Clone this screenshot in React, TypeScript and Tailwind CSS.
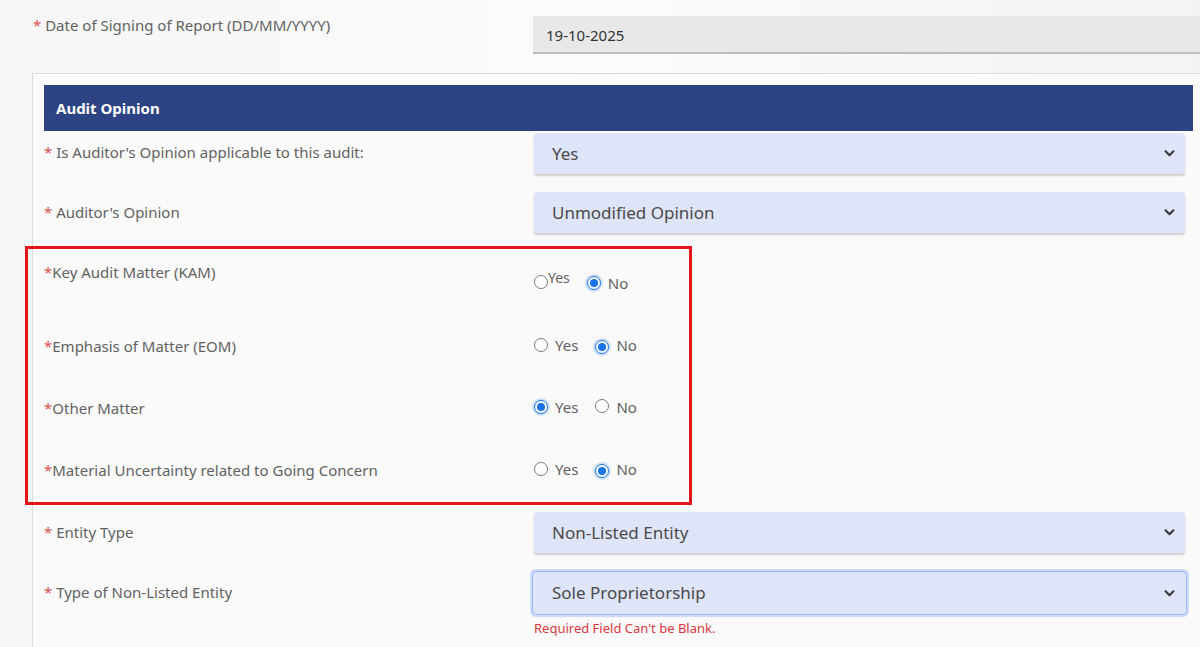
import React from "react";

const font = { fontFamily: '"Noto Sans", "Open Sans", sans-serif' };

const Chevron = () => (
  <svg width="11" height="7" viewBox="0 0 12 8" className="text-[#3a3a3a]">
    <path d="M1.5 1.5 L6 6 L10.5 1.5" fill="none" stroke="currentColor" strokeWidth="2.4" strokeLinecap="round" strokeLinejoin="round" />
  </svg>
);

const Select = ({ value }: { value: string }) => (
  <div className="flex h-[41px] w-[651px] items-center justify-between rounded-[3px] bg-[#dfe5f8] pl-[18px] pr-[10px] text-[17px] text-[#4a4a4a] shadow-[0_2px_2px_rgba(0,0,0,0.18)]">
    <span>{value}</span>
    <Chevron />
  </div>
);

const Radio = ({ checked }: { checked?: boolean }) =>
  checked ? (
    <span className="inline-flex h-[14px] w-[14px] items-center justify-center rounded-full border-[1.5px] border-[#1a73e8] bg-white shadow-[0_0_0_2px_rgba(26,115,232,0.2)]">
      <span className="h-[8px] w-[8px] rounded-full bg-[#1a73e8]" />
    </span>
  ) : (
    <span className="inline-block h-[14px] w-[14px] rounded-full border border-[#7a7a7a] bg-white" />
  );

const Label = ({ text, tight }: { text: string; tight?: boolean }) => (
  <span className="text-[15px] text-[#626262]">
    <span className="text-[#d9534f]">*</span>
    {tight ? "" : " "}
    {text}
  </span>
);

const radios = [
  { label: "Emphasis of Matter (EOM)", yes: false },
  { label: "Other Matter", yes: true },
  { label: "Material Uncertainty related to Going Concern", yes: false },
];

export default function App() {
  return (
    <div style={font} className="h-[647px] w-[1200px] overflow-hidden bg-gradient-to-r from-[#f6f6f6] via-[#fbfbfb] to-[#f3f3f3]">
      <div className="flex h-[73px] pl-[33px]">
        <div className="w-[500px] pt-[13px]">
          <Label text="Date of Signing of Report (DD/MM/YYYY)" />
        </div>
        <div className="mt-[16px] flex h-[38px] flex-1 items-center border-b-2 border-[#bdbdbd] bg-[#e8e8e8] pl-[13px] pt-[3px] text-[15px] text-[#333]">
          19-10-2025
        </div>
      </div>

      <div className="relative ml-[32px] h-[600px] border border-r-0 border-[#dcdcdc] bg-[#fafafa] pl-[11px] pr-[7px] pt-[11px]">
        <div className="flex h-[46px] items-center bg-[#2d4383] pl-[12px] text-[15px] font-bold text-white">
          Audit Opinion
        </div>

        <div className="flex h-[60px] items-start">
          <div className="w-[490px] pt-[9px]">
            <Label text="Is Auditor's Opinion applicable to this audit:" />
          </div>
          <div className="pt-[2px]">
            <Select value="Yes" />
          </div>
        </div>

        <div className="flex h-[56px] items-start">
          <div className="w-[490px] pt-[9px]">
            <Label text="Auditor's Opinion" />
          </div>
          <div className="pt-[1px]">
            <Select value="Unmodified Opinion" />
          </div>
        </div>

        <div className="flex h-[62px] items-start">
          <div className="w-[490px] pt-[13px]">
            <Label text="Key Audit Matter (KAM)" tight />
          </div>
          <div className="flex items-center pt-[23px] text-[15px] text-[#626262]">
            <Radio />
            <span className="-mt-[10px] text-[14px]">Yes</span>
            <span className="ml-[17px] mt-[2px] flex items-center gap-[7px]">
              <Radio checked />
              <span>No</span>
            </span>
          </div>
        </div>

        {radios.map((r) => (
          <div key={r.label} className="flex h-[62px] items-start">
            <div className="w-[490px] pt-[25px]">
              <Label text={r.label} tight />
            </div>
            <div className="flex items-center gap-[7px] pt-[25px] text-[15px] text-[#626262]">
              <Radio checked={r.yes} />
              <span>Yes</span>
              <span className="ml-[10px]">
                <Radio checked={!r.yes} />
              </span>
              <span>No</span>
            </div>
          </div>
        ))}

        <div className="flex h-[76px] items-start pt-[17px]">
          <div className="w-[490px] pt-[8px]">
            <Label text="Entity Type" />
          </div>
          <Select value="Non-Listed Entity" />
        </div>

        <div className="flex items-start">
          <div className="w-[490px] pt-[9px]">
            <Label text="Type of Non-Listed Entity" />
          </div>
          <div>
            <div className="-ml-[2px] flex h-[44px] w-[655px] items-center justify-between rounded-[4px] border border-[#9db8f0] bg-[#dfe5f8] pl-[19px] pr-[11px] text-[17px] text-[#4a4a4a] shadow-[0_0_0_2px_rgba(160,190,245,0.5)]">
              <span>Sole Proprietorship</span>
              <Chevron />
            </div>
            <div className="mt-[4px] text-[13px] text-[#d9383f]">Required Field Can't be Blank.</div>
          </div>
        </div>

        <div className="pointer-events-none absolute left-[-8px] top-[172px] h-[259px] w-[667px] border-[3px] border-[#e3141c]" />
      </div>
    </div>
  );
}
